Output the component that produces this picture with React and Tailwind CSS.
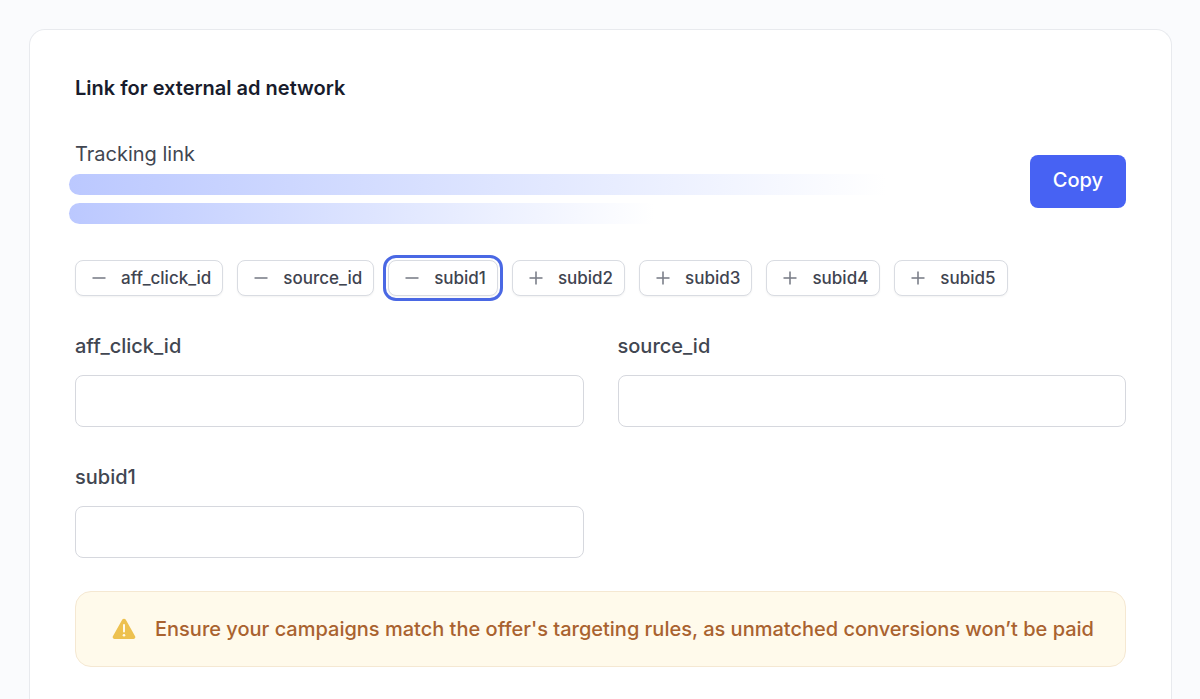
import { useState } from 'react';
import clsx from 'clsx';

const PARAMS = ['aff_click_id', 'source_id', 'subid1', 'subid2', 'subid3', 'subid4', 'subid5'];

function SignIcon({ minus }) {
  return (
    <svg viewBox="0 0 14 14" className="h-3.5 w-3.5 shrink-0 text-[#7b7f8a]" fill="none" stroke="currentColor" strokeWidth="1.6" aria-hidden="true">
      <path d="M0.5 7h13" />
      {!minus && <path d="M7 0.5v13" />}
    </svg>
  );
}

function WarningIcon() {
  return (
    <svg viewBox="0 0 24 22" className="h-[22px] w-6 shrink-0" aria-hidden="true">
      <path
        d="M10.3 1.6a2 2 0 0 1 3.4 0l9.4 16.6a1.9 1.9 0 0 1-1.7 2.8H2.6a1.9 1.9 0 0 1-1.7-2.8z"
        fill="#edc14f"
      />
      <path d="M12 7v6.4" stroke="#fffaeb" strokeWidth="2" strokeLinecap="round" />
      <circle cx="12" cy="17.2" r="1.3" fill="#fffaeb" />
    </svg>
  );
}

function ParamChip({ name, active, focused, onClick }) {
  return (
    <button
      type="button"
      aria-pressed={active}
      onClick={onClick}
      className={clsx(
        'flex h-9 items-center gap-[15px] rounded-lg border border-[#d9dce2] bg-white pr-[11px] pl-4 text-[17px] leading-6 font-medium text-[#3f4450] shadow-xs',
        focused && 'outline-3 outline-offset-2 outline-[#4a68e4]'
      )}
    >
      <SignIcon minus={active} />
      {name}
    </button>
  );
}

function ParamField({ name }) {
  return (
    <div className="flex flex-col gap-[15px]">
      <label htmlFor={name} className="text-xl leading-7 font-medium text-[#414651]">
        {name}
      </label>
      <input
        id={name}
        type="text"
        className="h-13 w-full rounded-lg border border-[#d6d8de] bg-white px-4 text-xl text-[#414651]"
      />
    </div>
  );
}

function App() {
  const [active, setActive] = useState(['aff_click_id', 'source_id', 'subid1']);
  const [focused, setFocused] = useState('subid1');

  const toggle = (name) => {
    setFocused(name);
    setActive((prev) => (prev.includes(name) ? prev.filter((p) => p !== name) : [...prev, name]));
  };

  return (
    <div className="flex min-h-screen flex-col bg-[#fafbfd] pt-[29px] pr-7 pl-[29px] font-['Inter',sans-serif]">
      <main className="flex-1 rounded-t-2xl border border-b-0 border-[#e8eaee] bg-white px-[45px] pt-11 pb-8">
        <h1 className="text-xl leading-7 font-semibold text-[#181c2c]">Link for external ad network</h1>

        <section className="mt-[38px] flex items-start justify-between gap-8">
          <div className="flex-1">
            <h2 className="text-xl leading-7 text-[#414651]">Tracking link</h2>
            {/* Hidden link preview */}
            <div className="mt-1.5 -ml-1.5 flex flex-col gap-2">
              <div className="h-[21px] w-[88%] rounded-l-full bg-linear-to-r from-[#bbc8ff] to-white" />
              <div className="h-[21px] w-[63%] rounded-l-full bg-linear-to-r from-[#bbc8ff] to-white" />
            </div>
          </div>
          <button type="button" className="mt-[15px] h-[53px] rounded-lg bg-[#4762f3] px-[23px] pb-1 text-xl leading-7 font-medium text-white">
            Copy
          </button>
        </section>

        <div className="mt-9 flex flex-wrap gap-3.5">
          {PARAMS.map((name) => (
            <ParamChip
              key={name}
              name={name}
              active={active.includes(name)}
              focused={focused === name}
              onClick={() => toggle(name)}
            />
          ))}
        </div>

        <div className="mt-9 grid grid-cols-2 gap-x-[34px] gap-y-9">
          {PARAMS.filter((name) => active.includes(name)).map((name) => (
            <ParamField key={name} name={name} />
          ))}
        </div>

        <div role="alert" className="mt-[33px] flex min-h-19 items-center gap-[19px] rounded-2xl border border-[#f5e8d2] bg-[#fffaeb] pr-6 pl-9">
          <WarningIcon />
          <p className="text-xl leading-7 font-medium text-[#a9622f]">
            Ensure your campaigns match the offer's targeting rules, as unmatched conversions won’t be paid
          </p>
        </div>
      </main>
    </div>
  );
}

export default App;
